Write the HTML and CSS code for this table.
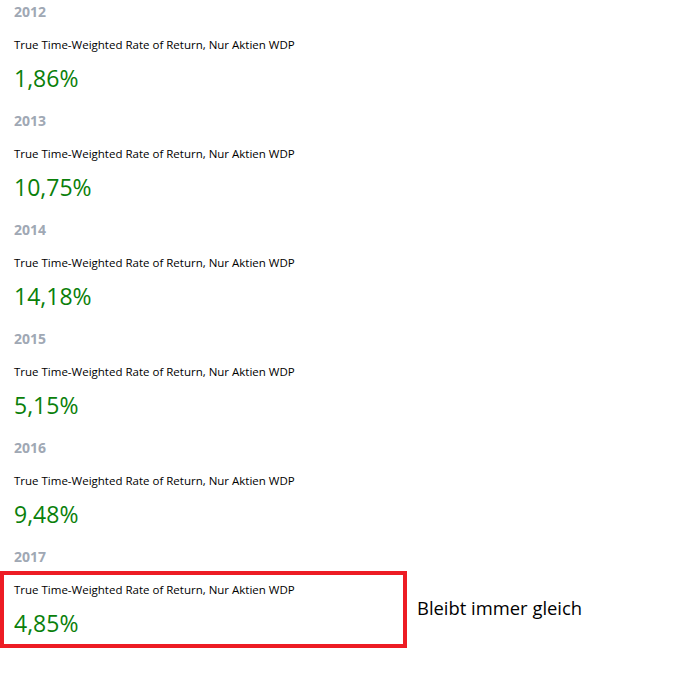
FILE: index.html
```html
<!DOCTYPE html>
<html lang="de">
<head>
<meta charset="utf-8">
<title>Rendite</title>
<link rel="stylesheet" href="styles.css">
</head>
<body>
<div class="list">
  <section class="block">
    <div class="year">2012</div>
    <div class="card"><div class="label">True Time-Weighted Rate of Return, Nur Aktien WDP</div><div class="value">1,86%</div></div>
  </section>
  <section class="block">
    <div class="year">2013</div>
    <div class="card"><div class="label">True Time-Weighted Rate of Return, Nur Aktien WDP</div><div class="value">10,75%</div></div>
  </section>
  <section class="block">
    <div class="year">2014</div>
    <div class="card"><div class="label">True Time-Weighted Rate of Return, Nur Aktien WDP</div><div class="value">14,18%</div></div>
  </section>
  <section class="block">
    <div class="year">2015</div>
    <div class="card"><div class="label">True Time-Weighted Rate of Return, Nur Aktien WDP</div><div class="value">5,15%</div></div>
  </section>
  <section class="block">
    <div class="year">2016</div>
    <div class="card"><div class="label">True Time-Weighted Rate of Return, Nur Aktien WDP</div><div class="value">9,48%</div></div>
  </section>
  <section class="block">
    <div class="year">2017</div>
    <div class="row">
      <div class="card highlight"><div class="label">True Time-Weighted Rate of Return, Nur Aktien WDP</div><div class="value">4,85%</div></div>
      <div class="note">Bleibt immer gleich</div>
    </div>
  </section>
</div>
</body>
</html>
```

FILE: styles.css
```css
html, body {
  margin: 0;
  padding: 0;
  background: #ffffff;
}
body {
  font-family: "Open Sans", "Noto Sans", sans-serif;
  color: #000;
}
.list {
  display: flex;
  flex-direction: column;
}
.block {
  height: 109px;
  display: flex;
  flex-direction: column;
}
.year {
  padding-left: 14px;
  font-size: 14px;
  font-weight: 700;
  line-height: 20px;
  margin-top: 2px;
  color: #a0a8b4;
}
.card {
  padding: 15px 0 0 14px;
  width: 393px;
}
.label {
  font-size: 11.5px;
  line-height: 16px;
  color: #000;
}
.value {
  font-size: 23px;
  line-height: 32px;
  margin-top: 9px;
  color: #0a800a;
}
.row {
  display: flex;
  align-items: center;
  gap: 10px;
  margin-top: 4px;
}
.card.highlight {
  border: 4px solid #ed1c24;
  padding: 7px 0 5px 10px;
  box-sizing: border-box;
  width: 407px;
}
.note {
  font-size: 18.4px;
  color: #000;
  margin-top: -4px;
}
```
